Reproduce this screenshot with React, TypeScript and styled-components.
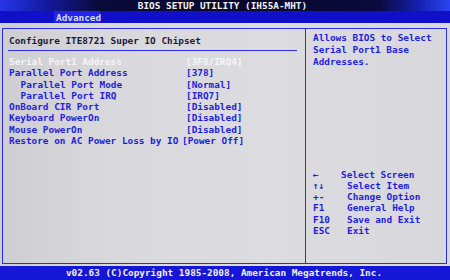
import React from 'react';
import styled, { createGlobalStyle } from 'styled-components';

const BLUE = '#1e1ee0';
const LINE = '#2c2ce4';

const GlobalStyle = createGlobalStyle`
  html, body {
    margin: 0;
    padding: 0;
    background: #d8d8dc;
  }
  * {
    box-sizing: border-box;
  }
`;

const Screen = styled.div`
  width: 450px;
  height: 280px;
  display: grid;
  grid-template-rows: 11px 12px 1fr 14px;
  overflow: hidden;
  font-family: 'DejaVu Sans Mono', 'Liberation Mono', monospace;
  font-weight: bold;
  font-size: 9.4px;
  background: linear-gradient(90deg, #cdcdd2 0%, #d9d9dd 25%, #dcdce0 60%, #d8d8dc 100%);
`;

const TitleBar = styled.div`
  display: flex;
  align-items: center;
  justify-content: center;
  padding-right: 5px;
  color: #f2f2f6;
  line-height: 11px;
  background: linear-gradient(
    90deg,
    #2636e8 0%,
    #141aa0 10%,
    #0a0a3c 22%,
    #08082c 50%,
    #0a0a3c 84%,
    #1620b0 93%,
    #2a44f2 100%
  );
`;

const TabBar = styled.div`
  display: flex;
  align-items: stretch;
  padding-left: 54px;
  background: #1010c8;
`;

const Tab = styled.div<{ $active?: boolean }>`
  display: flex;
  align-items: center;
  padding: 0 2px;
  width: 46px;
  color: ${p => (p.$active ? '#d0def8' : '#9090e0')};
  background: ${p => (p.$active ? '#2424ee' : 'transparent')};
`;

const Main = styled.div`
  padding: 5px 3px 2px 2px;
  display: flex;
`;

const Frame = styled.div`
  flex: 1;
  display: flex;
  border: 1px solid ${LINE};
`;

const LeftPanel = styled.div`
  width: 303px;
  border-right: 1px solid ${LINE};
  display: flex;
  flex-direction: column;
`;

const Heading = styled.div`
  padding: 6px 0 0 6px;
  line-height: 11px;
  color: #1c1c36;
`;

const Rule = styled.div`
  height: 1px;
  margin: 4px 8px 5px 5px;
  background: ${LINE};
`;

const Row = styled.div<{ $selected?: boolean }>`
  display: flex;
  padding-left: 6px;
  line-height: 11.3px;
  white-space: pre;
  color: ${p => (p.$selected ? '#f4f4f6' : BLUE)};
`;

const Label = styled.span<{ $sub?: boolean; $w?: number }>`
  flex: 0 0 ${p => p.$w ?? 177}px;
  padding-left: ${p => (p.$sub ? '11.5px' : '0')};
`;

const RightPanel = styled.div`
  flex: 1;
  display: flex;
  flex-direction: column;
  padding: 3px 0 27px 7px;
  color: ${BLUE};
`;

const Help = styled.div`
  line-height: 12px;
`;

const Legend = styled.div`
  margin-top: auto;
  display: grid;
  grid-template-columns: 28px 1fr;
  line-height: 11.2px;
`;

const Key = styled.span`
  white-space: pre;
`;

const Desc = styled.span<{ $indent?: boolean }>`
  padding-left: ${p => (p.$indent ? '6px' : '0')};
  white-space: pre;
`;

const Footer = styled.div`
  display: flex;
  align-items: center;
  justify-content: center;
  padding-right: 2px;
  background: #1616d6;
  color: #f0f0f8;
  line-height: 14px;
`;

const rows = [
  { label: 'Serial Port1 Address', value: '[3F8/IRQ4]', selected: true },
  { label: 'Parallel Port Address', value: '[378]' },
  { label: 'Parallel Port Mode', value: '[Normal]', sub: true },
  { label: 'Parallel Port IRQ', value: '[IRQ7]', sub: true },
  { label: 'OnBoard CIR Port', value: '[Disabled]' },
  { label: 'Keyboard PowerOn', value: '[Disabled]' },
  { label: 'Mouse PowerOn', value: '[Disabled]' },
  { label: 'Restore on AC Power Loss by IO', value: '[Power Off]', w: 173 },
];

const keys = [
  { key: '\u2190', desc: 'Select Screen', first: true },
  { key: '\u2191\u2193', desc: 'Select Item' },
  { key: '+-', desc: 'Change Option' },
  { key: 'F1', desc: 'General Help' },
  { key: 'F10', desc: 'Save and Exit' },
  { key: 'ESC', desc: 'Exit' },
];

export default function App() {
  return (
    <>
      <GlobalStyle />
      <Screen>
        <TitleBar>BIOS SETUP UTILITY (IH55A-MHT)</TitleBar>
        <TabBar>
          <Tab $active>Advanced</Tab>
        </TabBar>
        <Main>
          <Frame>
            <LeftPanel>
              <Heading>Configure ITE8721 Super IO Chipset</Heading>
              <Rule />
              {rows.map(r => (
                <Row key={r.label} $selected={r.selected}>
                  <Label $sub={r.sub} $w={r.w}>
                    {r.label}
                  </Label>
                  <span>{r.value}</span>
                </Row>
              ))}
            </LeftPanel>
            <RightPanel>
              <Help>
                Allows BIOS to Select
                <br />
                Serial Port1 Base
                <br />
                Addresses.
              </Help>
              <Legend>
                {keys.map(k => (
                  <React.Fragment key={k.key}>
                    <Key>{k.key}</Key>
                    <Desc $indent={!k.first}>{k.desc}</Desc>
                  </React.Fragment>
                ))}
              </Legend>
            </RightPanel>
          </Frame>
        </Main>
        <Footer>v02.63 (C)Copyright 1985-2008, American Megatrends, Inc.</Footer>
      </Screen>
    </>
  );
}
